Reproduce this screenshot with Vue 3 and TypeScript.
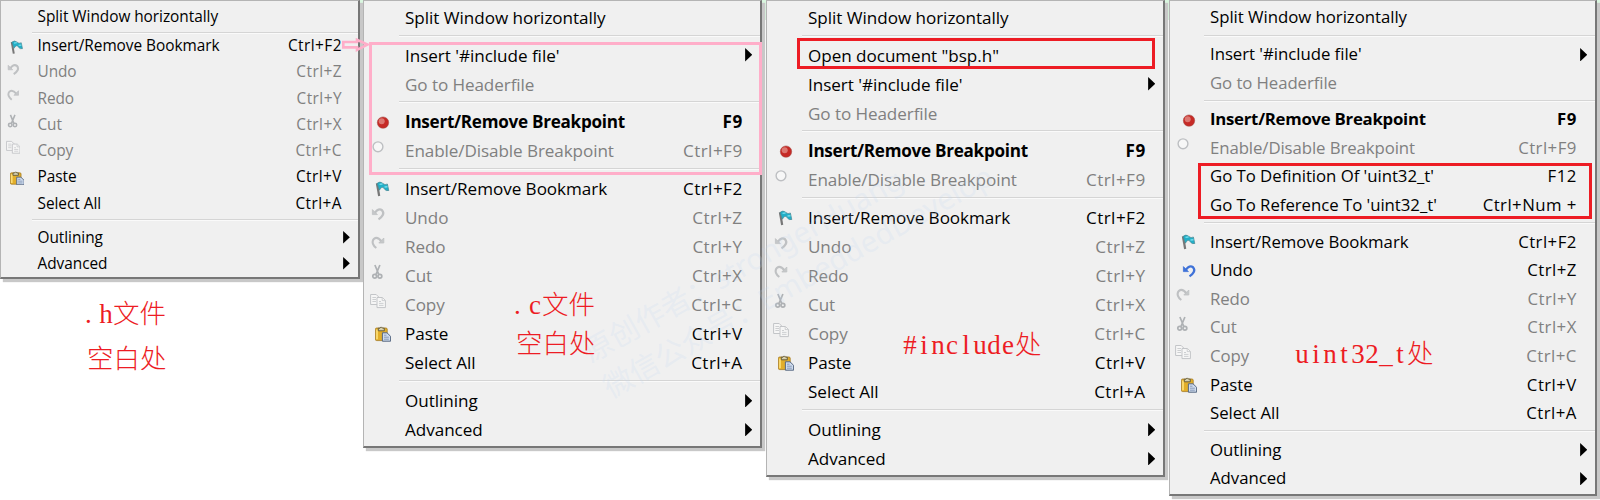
<script setup lang="ts">
type IconName = 'flag' | 'undo' | 'redo' | 'cut' | 'copy' | 'paste' | 'dot' | 'ring'

interface Entry {
  label?: string
  keys?: string
  icon?: IconName
  off?: boolean
  bold?: boolean
  sub?: boolean
  sep?: boolean
  tight?: boolean
}

interface Menu {
  id: string
  entries: Entry[]
}

interface NoteLine {
  code: string
  text: string
}

const sep: Entry = { sep: true }
const split: Entry = { label: 'Split Window horizontally' }
const include: Entry[] = [
  { label: "Insert '#include file'", sub: true },
  { label: 'Go to Headerfile', off: true },
  sep,
]
const breakpoints: Entry[] = [
  { label: 'Insert/Remove Breakpoint', keys: 'F9', icon: 'dot', bold: true },
  { label: 'Enable/Disable Breakpoint', keys: 'Ctrl+F9', icon: 'ring', off: true },
]

const editing = (canUndo = false): Entry[] => [
  { label: 'Insert/Remove Bookmark', keys: 'Ctrl+F2', icon: 'flag' },
  { label: 'Undo', keys: 'Ctrl+Z', icon: 'undo', off: !canUndo },
  { label: 'Redo', keys: 'Ctrl+Y', icon: 'redo', off: true },
  { label: 'Cut', keys: 'Ctrl+X', icon: 'cut', off: true },
  { label: 'Copy', keys: 'Ctrl+C', icon: 'copy', off: true },
  { label: 'Paste', keys: 'Ctrl+V', icon: 'paste' },
  { label: 'Select All', keys: 'Ctrl+A' },
  sep,
  { label: 'Outlining', sub: true },
  { label: 'Advanced', sub: true },
]

const menus: Menu[] = [
  { id: 'header', entries: [split, { sep: true, tight: true }, ...editing()] },
  { id: 'source', entries: [split, sep, ...include, ...breakpoints, sep, ...editing()] },
  {
    id: 'directive',
    entries: [split, sep, { label: 'Open document "bsp.h"' }, ...include, ...breakpoints, sep, ...editing()],
  },
  {
    id: 'symbol',
    entries: [
      split,
      sep,
      ...include,
      ...breakpoints,
      { label: "Go To Definition Of 'uint32_t'", keys: 'F12' },
      { label: "Go To Reference To 'uint32_t'", keys: 'Ctrl+Num +' },
      sep,
      ...editing(true),
    ],
  },
]

const notes: { id: string; lines: NoteLine[] }[] = [
  { id: 'n1', lines: [{ code: '.h', text: '文件' }, { code: '', text: '空白处' }] },
  { id: 'n2', lines: [{ code: '.c', text: '文件' }, { code: '', text: '空白处' }] },
  { id: 'n3', lines: [{ code: '#include', text: '处' }] },
  { id: 'n4', lines: [{ code: 'uint32_t', text: '处' }] },
]
</script>

<template>
  <div class="board">
    <div class="menus">
      <section v-for="m in menus" :key="m.id" class="menu" :class="m.id">
        <template v-for="(e, i) in m.entries" :key="i">
          <div v-if="e.sep" class="sep" :class="{ tight: e.tight }"></div>
          <div v-else class="row" :class="{ off: e.off, bold: e.bold }">
            <span class="slot">
              <svg v-if="e.icon" class="icon" viewBox="0 0 16 16">
                <g v-if="e.icon === 'flag'">
                  <path d="M1.9 2.2 4.2 15" stroke="#777" stroke-width="2.2" fill="none" />
                  <path d="M2 2.5Q5-.2 7.5 2.2T12.4 3L13.8 9.5Q11 10.5 9 7.5T4.4 9.2Z" fill="#22afc7" stroke="#4a8792" stroke-width=".7" />
                  <path d="M4.5 3.4 7.5 3M9.5 6l3-.3" stroke="#73dcec" stroke-width="1.4" />
                </g>
                <g v-else-if="e.icon === 'undo'" fill="none" :stroke="e.off ? '#bfc1c3' : '#3f72d8'">
                  <path d="M4.5 7.3Q8.5 1.7 12 4.2C15 7.4 12.2 11 8.5 13.4" stroke-width="2.3" />
                  <path d="M2.4 3.6V8.6H7.4Z" :fill="e.off ? '#c5c7c9' : '#3f72d8'" stroke-width=".8" />
                </g>
                <g v-else-if="e.icon === 'redo'" fill="none" stroke="#bfc1c3">
                  <path d="M11.5 6.5Q7.5 1.2 4 3.8C1 7 3.5 10.8 6.3 13" stroke-width="2.1" />
                  <path d="M13.8 3V8H8.8Z" fill="#c5c7c9" stroke-width=".8" />
                </g>
                <g v-else-if="e.icon === 'cut'" fill="none" stroke="#aeb1b4" stroke-width="1.7">
                  <path d="M4.9 1 8.7 10.3M9.9 1 6 10.3" />
                  <circle cx="4.7" cy="12.2" r="1.9" />
                  <circle cx="9.9" cy="12.2" r="1.9" />
                </g>
                <g v-else-if="e.icon === 'copy'" fill="#f6f6f6" stroke="#c3c5c8">
                  <path d="M.6 1.5H6.2L8.7 4V11.5H.6Z" />
                  <path d="M2.4 4.5H6M2.4 6.5H6M2.4 8.5H6" stroke-width=".8" />
                  <path d="M7 4.5H12.4L15.4 7.4V14.6H7Z" />
                  <path d="M12.2 4.8V7.6H15M9 8.5H11M9 10.4H13.5M9 12.4H13.5" stroke-width=".8" />
                </g>
                <g v-else-if="e.icon === 'paste'">
                  <rect x=".4" y="2" width="11.8" height="12.6" rx="1.3" fill="#e2ae2a" stroke="#a47a22" stroke-width=".8" />
                  <path d="M2 3.5V13.3" stroke="#ffe27c" stroke-width="1.6" />
                  <path d="M3.3 4.8V2.2H5Q6.3 -.4 7.6 2.2H9.3V4.8Z" fill="#d5cfae" stroke="#5c5537" stroke-width=".9" />
                  <path d="M7.4 6.8H12L15.6 10.3V15.2H7.4Z" fill="#cfdcee" stroke="#566782" stroke-width="1" />
                  <path d="M9 9.2H11.5M9 11.2H13.8M9 13.2H13.8" stroke="#8193b2" stroke-width=".9" />
                </g>
                <g v-else-if="e.icon === 'dot'">
                  <circle cx="8" cy="8.6" r="5.7" fill="#c62a26" stroke="#9e4a45" stroke-width=".5" />
                  <circle cx="6.7" cy="7.2" r="3" fill="#dc7771" />
                </g>
                <circle v-else cx="8" cy="7.8" r="4.9" fill="#f7f7f7" stroke="#bdbfc2" stroke-width="1.4" />
              </svg>
            </span>
            <span class="label">{{ e.label }}</span>
            <span v-if="e.keys" class="keys">{{ e.keys }}</span>
            <svg v-if="e.sub" class="arrow" viewBox="0 0 7 13"><path d="M0 0 7 6.5 0 13Z" /></svg>
          </div>
        </template>
      </section>
    </div>

    <div class="watermark">
      <div>原创作者：strongerHuang</div>
      <div>微信公众号：EmbeddedDevelop</div>
    </div>

    <div class="frame pink"></div>
    <div class="frame red doc"></div>
    <div class="frame red goto"></div>
    <svg class="pointer" viewBox="0 0 28 14">
      <path d="M1.3 4H15V1.8L25.5 6.6 15 11.8V9.4H1.3Z" />
    </svg>

    <div v-for="n in notes" :key="n.id" class="note" :class="n.id">
      <div v-for="(l, i) in n.lines" :key="i" :class="{ coded: l.code }"><i v-for="(c, k) in l.code" :key="k">{{ c }}</i>{{ l.text }}</div>
    </div>
  </div>
</template>

<style>
body {
  margin: 0;
  background: #fff;
}
</style>

<style scoped>
.board {
  position: relative;
  width: 1600px;
  height: 500px;
  overflow: hidden;
  background: linear-gradient(#d9f6df 0 20px, #fff 20px);
  font-family: 'Open Sans', 'Noto Sans', sans-serif;
}
.menus {
  display: flex;
  align-items: flex-start;
}
.menu {
  --pitch: 29.14px;
  --gap: 8.3px;
  --text: 17.1px;
  --start: 42px;
  --end: 17.4px;
  --icon: 16px;
  --icon-on: 19.5px;
  --icon-off: 14.6px;
  box-sizing: border-box;
  width: 399px;
  height: 448px;
  margin-right: 4px;
  padding-top: 2.1px;
  border: 1px solid #b4b4b4;
  border-right: 2px solid #777;
  border-bottom: 2px solid #777;
  background: #f0f0f0;
  box-shadow: 3px 3px 1px #c8c8c8;
  font-size: var(--text);
  color: #000;
}
.header {
  --pitch: 26.25px;
  --gap: 7.7px;
  --text: 15.4px;
  --start: 37.5px;
  --end: 16px;
  --icon: 14.5px;
  --icon-on: 17px;
  --icon-off: 13px;
  width: 360px;
  height: 279px;
  margin-right: 3px;
  padding-top: 2.4px;
}
.directive {
  height: 477px;
}
.symbol {
  --pitch: 28.6px;
  --gap: 8px;
  --text: 16.8px;
  --start: 41px;
  --end: 18.2px;
  --icon-off: 14.3px;
  width: 428px;
  height: 496px;
  margin-right: 0;
  padding-top: 2.4px;
}
.row {
  display: flex;
  align-items: center;
  height: var(--pitch);
  line-height: var(--pitch);
  padding-right: var(--end);
  white-space: nowrap;
}
.header .label,
.header .keys {
  padding-top: 0.6px;
}
.slot {
  display: flex;
  align-items: center;
  flex: none;
  box-sizing: border-box;
  width: calc(var(--start) - 1px);
  height: 100%;
  padding-left: calc(var(--icon-on) - var(--icon) / 2 - 1px);
  padding-top: 1px;
}
.header .slot {
  padding-top: 2px;
}
.off .slot {
  padding-left: calc(var(--icon-off) - var(--icon) / 2 - 1px);
  padding-top: 0;
  padding-bottom: 7.5px;
}
.header .off .slot {
  padding-top: 0;
  padding-bottom: 6.5px;
}
.icon {
  display: block;
  width: var(--icon);
  height: var(--icon);
}
.label {
  flex: 1;
  letter-spacing: -0.04px;
}
.keys {
  letter-spacing: 0.45px;
}
.off {
  color: #808080;
}
.off .label {
  letter-spacing: -0.09px;
}
.bold {
  font-weight: 700;
}
.bold .label {
  letter-spacing: -0.27px;
}
.arrow {
  width: 7.5px;
  height: 13.5px;
  margin-right: calc(8px - var(--end));
}
.header .arrow {
  width: 7px;
  height: 12.5px;
}
.sep {
  box-sizing: border-box;
  height: var(--gap);
  margin-left: calc(var(--start) - 7px);
  padding-top: 2.6px;
}
.sep::before {
  content: '';
  display: block;
  height: 1px;
  border-bottom: 1px solid #fafafa;
  background: #d5d5d5;
}
.tight {
  height: 3.2px;
  padding-top: 2px;
}
.watermark {
  position: absolute;
  left: 575px;
  top: 335px;
  transform: rotate(-29.3deg);
  transform-origin: 0 0;
  font: 29.6px/41px 'Noto Sans', 'Noto Sans CJK SC', sans-serif;
  white-space: nowrap;
  color: rgba(195, 215, 240, 0.21);
}
.frame {
  position: absolute;
  box-sizing: border-box;
  border: 3px solid #ed1c24;
}
.frame.pink {
  left: 369px;
  top: 42px;
  width: 393px;
  height: 133px;
  border-color: #ffaec9;
}
.doc {
  left: 797px;
  top: 38px;
  width: 358px;
  height: 31px;
}
.goto {
  left: 1198px;
  top: 163px;
  width: 394px;
  height: 56px;
}
.pointer {
  position: absolute;
  left: 342px;
  top: 38px;
  width: 28px;
  height: 14px;
  fill: none;
  stroke: #ffaec9;
  stroke-width: 2.6;
}
.note {
  position: absolute;
  font: 300 26.5px/39px 'Noto Sans CJK SC', sans-serif;
  white-space: nowrap;
  color: #ed1c24;
}
.note i {
  display: inline-block;
  width: 14px;
  font: 27px/1 'Liberation Serif', serif;
  text-align: center;
}
.n1 {
  left: 87px;
  top: 290px;
  line-height: 44.5px;
}
.n1 .coded,
.n2 .coded {
  margin-left: -2px;
}
.coded i:first-child:nth-last-child(2) {
  text-align: left;
}
.n2 {
  left: 516px;
  top: 283px;
}
.n3 {
  left: 903px;
  top: 323px;
}
.n4 {
  left: 1295px;
  top: 332px;
}
</style>
